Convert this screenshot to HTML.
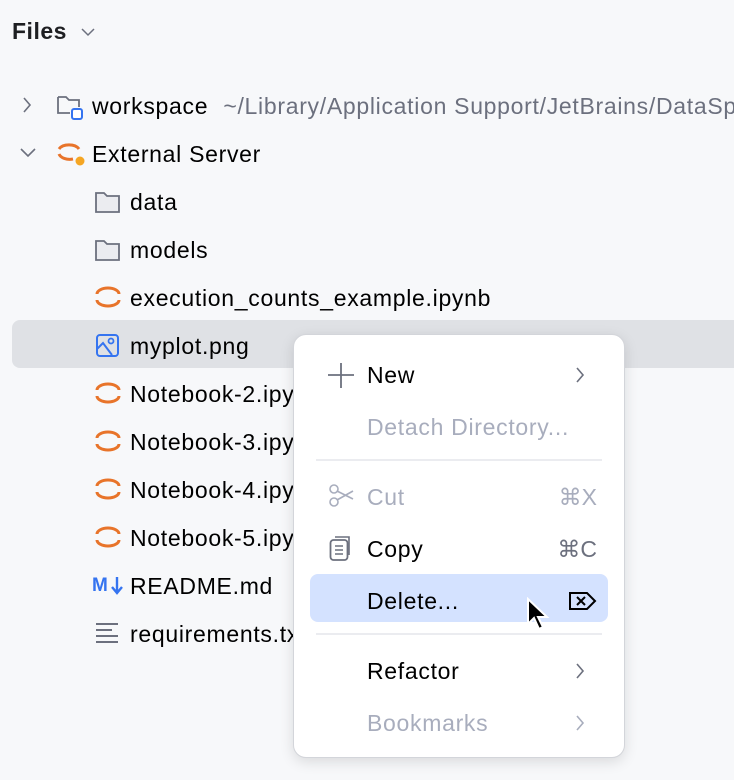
<!DOCTYPE html>
<html><head><style>
body{margin:0;width:734px;height:780px;background:#f7f8fa;font-family:"Liberation Sans",sans-serif;position:relative;overflow:hidden;color:#000}
.a{position:absolute;white-space:nowrap}
.t{font-size:23px;line-height:48px;height:48px;letter-spacing:0.7px}
.sel{position:absolute;left:12px;top:320px;width:740px;height:48px;background:#dfe1e5;border-radius:8px}
.menu{position:absolute;left:293px;top:334px;width:330px;height:422px;background:#fff;border:1px solid #d3d5da;border-radius:13px;box-shadow:0 4px 14px rgba(0,0,0,.12)}
.mi{position:absolute;left:73px;font-size:23px;line-height:52px;height:52px;letter-spacing:0.7px}
.dis{color:#a8adbd}
.sc{position:absolute;right:27px;font-size:23px;line-height:52px;color:#6c707e}
.sep{position:absolute;left:22px;right:22px;height:2px;background:#ebecf0}
</style></head><body>
<div class="a" style="left:12px;top:18px;font-size:23px;font-weight:bold;color:#1e1f22;letter-spacing:0.5px">Files</div>
<svg class="a" style="left:80px;top:26px" width="16" height="12"><path d="M2 3l6 6 6-6" fill="none" stroke="#6c707e" stroke-width="1.5"/></svg>
<div class="sel"></div>

<svg class="a" style="left:20px;top:96px" width="14" height="18"><path d="M4 2l6 7-6 7" fill="none" stroke="#6c707e" stroke-width="1.6"/></svg>
<svg class="a" style="left:56px;top:93px" width="30" height="30"><path d="M2 4h8l3 3h10v7M2 4v16h12" fill="none" stroke="#6c707e" stroke-width="1.8"/><rect x="16" y="16" width="10" height="10" rx="2" fill="#fff" stroke="#3574f0" stroke-width="2"/></svg>
<div class="a t" style="left:92px;top:82px">workspace <span style="color:#6c707e;margin-left:8px">~/Library/Application Support/JetBrains/DataSpell</span></div>

<svg class="a" style="left:19px;top:146px" width="20" height="14"><path d="M2 3l7 7 7-7" fill="none" stroke="#6c707e" stroke-width="1.6"/></svg>
<svg class="a" style="left:56px;top:140px" width="30" height="28"><path d="M3 9a11 7 0 0 1 20 0" fill="none" stroke="#e8742a" stroke-width="3"/><path d="M3 14a11 7 0 0 0 14 5" fill="none" stroke="#e8742a" stroke-width="3"/><circle cx="24" cy="21" r="4.5" fill="#f5a623"/></svg>
<div class="a t" style="left:92px;top:130px">External Server</div>

<svg class="a" style="left:94px;top:190px" width="28" height="24"><path d="M2 3h8l3 3h12v16H2z" fill="#ebecf0" stroke="#6c707e" stroke-width="1.8"/></svg>
<div class="a t" style="left:130px;top:178px">data</div>
<svg class="a" style="left:94px;top:238px" width="28" height="24"><path d="M2 3h8l3 3h12v16H2z" fill="#ebecf0" stroke="#6c707e" stroke-width="1.8"/></svg>
<div class="a t" style="left:130px;top:226px">models</div>

<svg class="a" style="left:94px;top:284px" width="28" height="28"><path d="M3 10a11 6 0 0 1 22 0M3 16a11 6 0 0 0 22 0" fill="none" stroke="#e8742a" stroke-width="3"/></svg>
<div class="a t" style="left:130px;top:274px">execution_counts_example.ipynb</div>

<svg class="a" style="left:95px;top:333px" width="26" height="26"><rect x="2" y="2" width="21" height="21" rx="3" fill="none" stroke="#3574f0" stroke-width="2"/><circle cx="16" cy="8" r="2.5" fill="none" stroke="#3574f0" stroke-width="1.8"/><path d="M2 16l6-6 9 12" fill="none" stroke="#3574f0" stroke-width="2"/></svg>
<div class="a t" style="left:130px;top:322px">myplot.png</div>

<svg class="a" style="left:94px;top:380px" width="28" height="28"><path d="M3 10a11 6 0 0 1 22 0M3 16a11 6 0 0 0 22 0" fill="none" stroke="#e8742a" stroke-width="3"/></svg>
<div class="a t" style="left:130px;top:370px">Notebook-2.ipynb</div>
<svg class="a" style="left:94px;top:428px" width="28" height="28"><path d="M3 10a11 6 0 0 1 22 0M3 16a11 6 0 0 0 22 0" fill="none" stroke="#e8742a" stroke-width="3"/></svg>
<div class="a t" style="left:130px;top:418px">Notebook-3.ipynb</div>
<svg class="a" style="left:94px;top:476px" width="28" height="28"><path d="M3 10a11 6 0 0 1 22 0M3 16a11 6 0 0 0 22 0" fill="none" stroke="#e8742a" stroke-width="3"/></svg>
<div class="a t" style="left:130px;top:466px">Notebook-4.ipynb</div>
<svg class="a" style="left:94px;top:524px" width="28" height="28"><path d="M3 10a11 6 0 0 1 22 0M3 16a11 6 0 0 0 22 0" fill="none" stroke="#e8742a" stroke-width="3"/></svg>
<div class="a t" style="left:130px;top:514px">Notebook-5.ipynb</div>

<div class="a" style="left:92px;top:574px;font-size:19px;font-weight:bold;color:#3574f0;line-height:24px">M</div>
<svg class="a" style="left:110px;top:576px" width="14" height="20"><path d="M7 1v16M2 11l5 6 5-6" fill="none" stroke="#3574f0" stroke-width="2.4"/></svg>
<div class="a t" style="left:130px;top:562px">README.md</div>
<svg class="a" style="left:95px;top:622px" width="26" height="22"><path d="M1 2h22M1 8h16M1 14h22M1 20h22" stroke="#6c707e" stroke-width="2"/></svg>
<div class="a t" style="left:130px;top:610px">requirements.txt</div>

<div class="menu">
<svg class="a" style="left:34px;top:27px" width="26" height="26"><path d="M13 1v25M0 13h26" stroke="#6c707e" stroke-width="1.8"/></svg>
<div class="mi" style="top:14px">New</div>
<svg class="a" style="left:280px;top:31px" width="12" height="18"><path d="M3 2l6 7-6 7" fill="none" stroke="#6c707e" stroke-width="1.6"/></svg>
<div class="mi dis" style="top:66px">Detach Directory...</div>
<div class="sep" style="top:124px"></div>
<svg class="a" style="left:34px;top:149px" width="26" height="24"><circle cx="6" cy="5" r="4" fill="none" stroke="#a8adbd" stroke-width="1.6"/><circle cx="6" cy="18" r="4" fill="none" stroke="#a8adbd" stroke-width="1.6"/><path d="M9 7l16 8M9 16l16-9" stroke="#a8adbd" stroke-width="1.6"/></svg>
<div class="mi dis" style="top:136px">Cut</div>
<div class="sc" style="top:136px;color:#a8adbd">⌘X</div>
<svg class="a" style="left:35px;top:200px" width="26" height="28"><rect x="1.5" y="5" width="17" height="20" rx="3" fill="none" stroke="#6c707e" stroke-width="1.8"/><path d="M6 2h14v18" fill="none" stroke="#6c707e" stroke-width="1.6"/><path d="M6 11h8M6 15h8M6 19h8" stroke="#6c707e" stroke-width="1.6"/></svg>
<div class="mi" style="top:188px">Copy</div>
<div class="sc" style="top:188px">⌘C</div>
<div style="position:absolute;left:16px;top:239px;width:298px;height:48px;background:#d4e2ff;border-radius:8px"></div>
<div class="mi" style="top:240px">Delete...</div>
<svg class="a" style="left:274px;top:256px" width="30" height="20"><path d="M2 2h17l8 8-8 8H2z" fill="none" stroke="#000" stroke-width="2"/><path d="M9 6l8 8M17 6l-8 8" stroke="#000" stroke-width="2"/></svg>
<svg class="a" style="left:232px;top:262px" width="26" height="36"><path d="M2 2v25l6-6 5 11 4-2-5-10h9z" fill="#000" stroke="#fff" stroke-width="2"/></svg>
<div class="sep" style="top:298px"></div>
<div class="mi" style="top:310px">Refactor</div>
<svg class="a" style="left:280px;top:327px" width="12" height="18"><path d="M3 2l6 7-6 7" fill="none" stroke="#6c707e" stroke-width="1.6"/></svg>
<div class="mi dis" style="top:362px">Bookmarks</div>
<svg class="a" style="left:280px;top:379px" width="12" height="18"><path d="M3 2l6 7-6 7" fill="none" stroke="#a8adbd" stroke-width="1.6"/></svg>
</div>
</body></html>
